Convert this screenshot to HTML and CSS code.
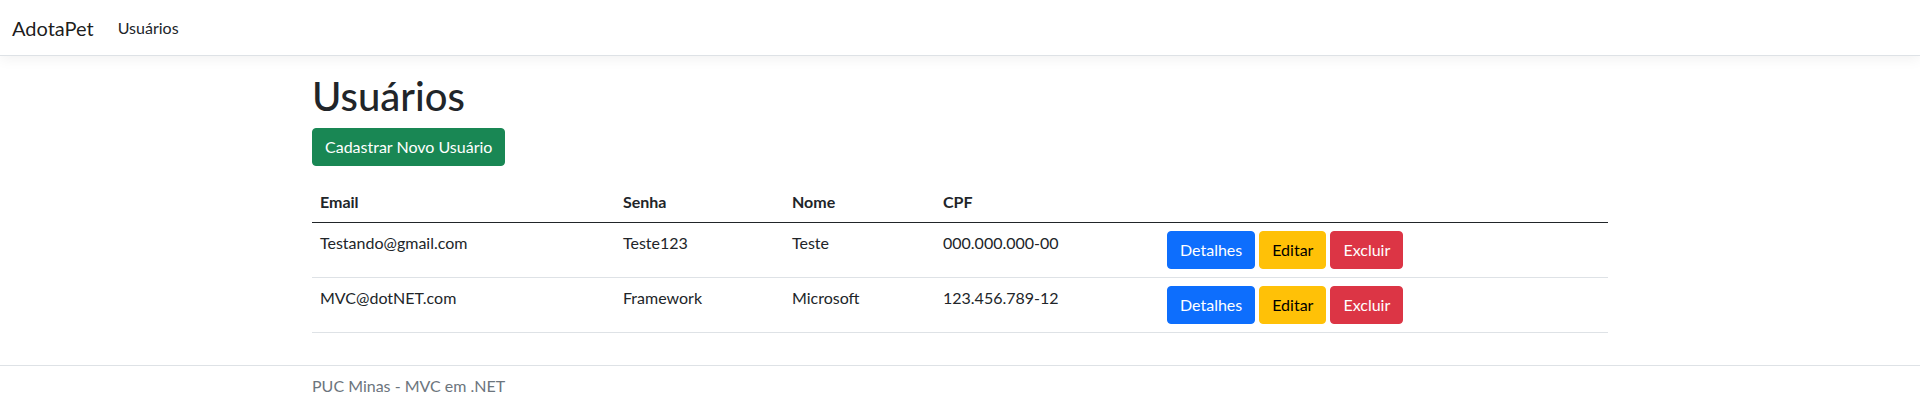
FILE: index.html
```html
<!DOCTYPE html>
<html lang="pt-BR">
<head>
<meta charset="utf-8">
<title>Usuários - AdotaPet</title>
<link rel="stylesheet" href="styles.css">
</head>
<body>
<header>
  <nav class="navbar">
    <div class="navbar-inner">
      <a class="brand" href="#">AdotaPet</a>
      <ul class="nav">
        <li><a class="nav-link" href="#">Usuários</a></li>
      </ul>
    </div>
  </nav>
</header>
<div class="container">
  <main class="main">
    <h1 class="title">Usuários</h1>
    <div class="actions-top">
      <a class="btn btn-success" href="#">Cadastrar Novo Usuário</a>
    </div>
    <table class="table">
      <colgroup>
        <col class="col-email">
        <col class="col-senha">
        <col class="col-nome">
        <col class="col-cpf">
        <col>
      </colgroup>
      <thead>
        <tr>
          <th>Email</th>
          <th>Senha</th>
          <th>Nome</th>
          <th>CPF</th>
          <th></th>
        </tr>
      </thead>
      <tbody>
        <tr>
          <td>Testando@gmail.com</td>
          <td>Teste123</td>
          <td>Teste</td>
          <td>000.000.000-00</td>
          <td>
            <div class="row-actions">
              <a class="btn btn-primary" href="#">Detalhes</a>
              <a class="btn btn-warning" href="#">Editar</a>
              <a class="btn btn-danger" href="#">Excluir</a>
            </div>
          </td>
        </tr>
        <tr>
          <td>MVC@dotNET.com</td>
          <td>Framework</td>
          <td>Microsoft</td>
          <td>123.456.789-12</td>
          <td>
            <div class="row-actions">
              <a class="btn btn-primary" href="#">Detalhes</a>
              <a class="btn btn-warning" href="#">Editar</a>
              <a class="btn btn-danger" href="#">Excluir</a>
            </div>
          </td>
        </tr>
      </tbody>
    </table>
  </main>
</div>
<footer class="footer">
  <div class="container">PUC Minas - MVC em .NET</div>
</footer>
</body>
</html>
```
FILE: styles.css
```css
* {
  box-sizing: border-box;
}

html, body {
  margin: 0;
  padding: 0;
}

body {
  font-family: Lato, "Noto Sans", sans-serif;
  font-size: 16px;
  line-height: 1.5;
  color: #212529;
  background: #fff;
}

a {
  text-decoration: none;
}

.navbar {
  background: #fff;
  border-bottom: 1px solid #dee2e6;
  box-shadow: 0 4px 12px rgba(0, 0, 0, 0.05);
  padding: 8px 0 7px;
}

.navbar-inner {
  display: flex;
  align-items: center;
  padding: 0 12px;
}

.brand {
  font-size: 20px;
  line-height: 30px;
  padding: 5px 0;
  margin-right: 16px;
  color: rgba(0, 0, 0, 0.9);
}

.nav {
  display: flex;
  list-style: none;
  margin: 0;
  padding: 0;
}

.nav-link {
  display: block;
  padding: 8px;
  color: #212529;
}

.container {
  width: 1320px;
  margin: 0 auto;
  padding: 0 12px;
}

.main {
  padding-top: 16px;
  padding-bottom: 16px;
}

.title {
  font-size: 40px;
  font-weight: 500;
  line-height: 1.2;
  margin: 0 0 8px;
}

.actions-top {
  margin-bottom: 16px;
  display: flex;
}

.btn {
  display: inline-block;
  padding: 6px 12px;
  font-size: 16px;
  line-height: 24px;
  border: 1px solid transparent;
  border-radius: 4px;
  text-align: center;
  white-space: nowrap;
}

.btn-success {
  background: #198754;
  border-color: #198754;
  color: #fff;
}

.btn-primary {
  background: #0d6efd;
  border-color: #0d6efd;
  color: #fff;
}

.btn-warning {
  background: #ffc107;
  border-color: #ffc107;
  color: #000;
}

.btn-danger {
  background: #dc3545;
  border-color: #dc3545;
  color: #fff;
}

.table {
  width: 100%;
  border-collapse: collapse;
  table-layout: fixed;
  margin-bottom: 16px;
}

.col-email { width: 303px; }
.col-senha { width: 169px; }
.col-nome { width: 151px; }
.col-cpf { width: 224px; }

.table th,
.table td {
  padding: 8px;
  text-align: left;
  vertical-align: top;
}

.table th {
  font-weight: 700;
  vertical-align: bottom;
  border-bottom: 1px solid #212529;
}

.table td {
  border-bottom: 1px solid #dee2e6;
}

.row-actions {
  display: flex;
  gap: 4px;
}

.footer {
  border-top: 1px solid #dee2e6;
  color: #6c757d;
  padding: 8px 0;
  line-height: 24px;
}
```
